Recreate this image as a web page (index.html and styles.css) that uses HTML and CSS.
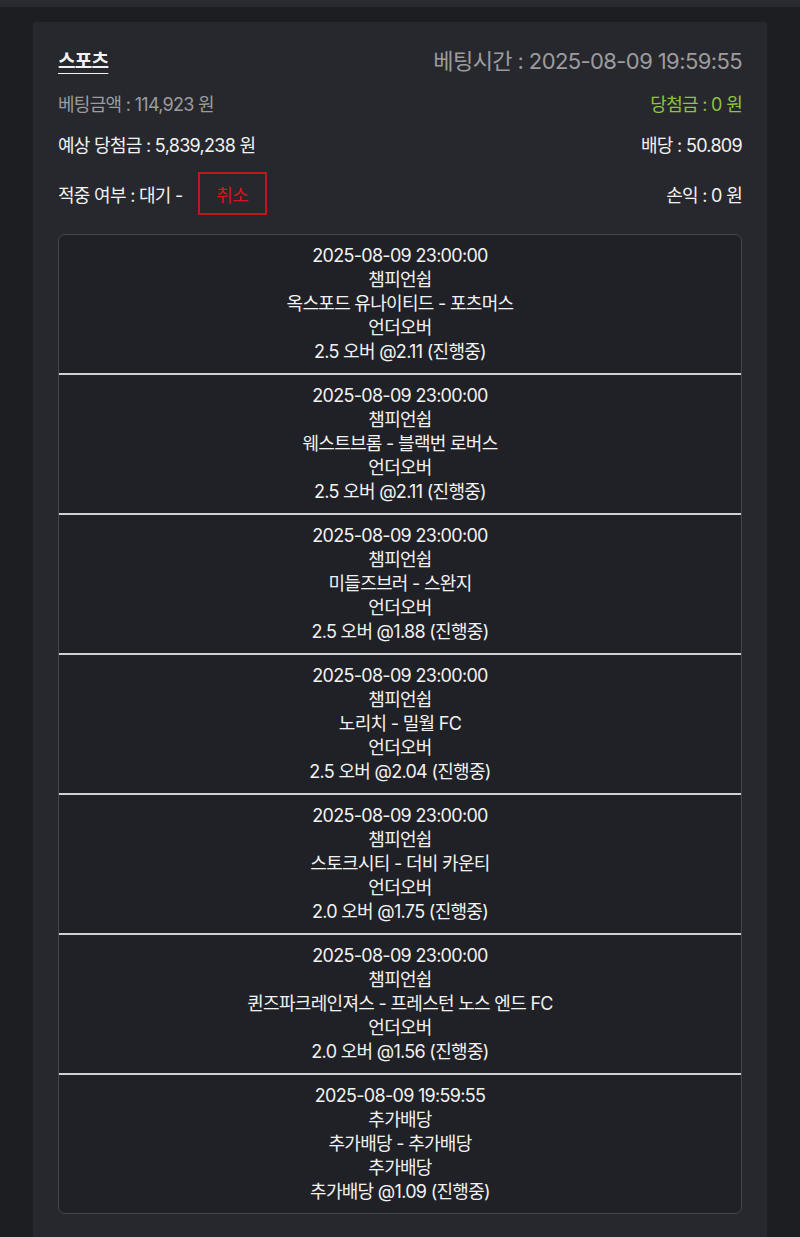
FILE: index.html
```html
<!DOCTYPE html>
<html lang="ko">

<head>
    <meta charset="UTF-8">
    <meta name="viewport" content="width=device-width, initial-scale=1.0">
    <title>베팅내역</title>
    <link rel="stylesheet" href="styles.css">
</head>

<body>
    <div class="topbar"></div>
    <div class="page">
        <div class="bet-card">
            <div class="row">
                <span class="kind">스포츠</span>
                <span class="bet-time">베팅시간 : 2025-08-09 19:59:55</span>
            </div>
            <div class="row muted">
                <span>베팅금액 : 114,923 원</span>
                <span class="win">당첨금 : 0 원</span>
            </div>
            <div class="row">
                <span>예상 당첨금 : 5,839,238 원</span>
                <span>배당 : 50.809</span>
            </div>
            <div class="row status-row">
                <span class="status">적중 여부 : 대기 - <button class="cancel-btn">취소</button></span>
                <span>손익 : 0 원</span>
            </div>

            <div class="picks">
                <div class="pick">
                    <p>2025-08-09 23:00:00</p>
                    <p>챔피언쉽</p>
                    <p>옥스포드 유나이티드 - 포츠머스</p>
                    <p>언더오버</p>
                    <p>2.5 오버 @2.11 (진행중)</p>
                </div>
                <div class="pick">
                    <p>2025-08-09 23:00:00</p>
                    <p>챔피언쉽</p>
                    <p>웨스트브롬 - 블랙번 로버스</p>
                    <p>언더오버</p>
                    <p>2.5 오버 @2.11 (진행중)</p>
                </div>
                <div class="pick">
                    <p>2025-08-09 23:00:00</p>
                    <p>챔피언쉽</p>
                    <p>미들즈브러 - 스완지</p>
                    <p>언더오버</p>
                    <p>2.5 오버 @1.88 (진행중)</p>
                </div>
                <div class="pick">
                    <p>2025-08-09 23:00:00</p>
                    <p>챔피언쉽</p>
                    <p>노리치 - 밀월 FC</p>
                    <p>언더오버</p>
                    <p>2.5 오버 @2.04 (진행중)</p>
                </div>
                <div class="pick">
                    <p>2025-08-09 23:00:00</p>
                    <p>챔피언쉽</p>
                    <p>스토크시티 - 더비 카운티</p>
                    <p>언더오버</p>
                    <p>2.0 오버 @1.75 (진행중)</p>
                </div>
                <div class="pick">
                    <p>2025-08-09 23:00:00</p>
                    <p>챔피언쉽</p>
                    <p>퀸즈파크레인져스 - 프레스턴 노스 엔드 FC</p>
                    <p>언더오버</p>
                    <p>2.0 오버 @1.56 (진행중)</p>
                </div>
                <div class="pick">
                    <p>2025-08-09 19:59:55</p>
                    <p>추가배당</p>
                    <p>추가배당 - 추가배당</p>
                    <p>추가배당</p>
                    <p>추가배당 @1.09 (진행중)</p>
                </div>
            </div>
        </div>
    </div>
</body>

</html>
```

FILE: styles.css
```css
body {
    margin: 0;
    padding: 0;
    background-color: #1d1e22;
    color: #f2f2f2;
    font-family: Inter, "Noto Sans CJK KR", sans-serif;
    font-size: 18px;
    letter-spacing: -0.7px;
}

.topbar {
    height: 7px;
    background-color: #2a2b30;
}

.page {
    padding: 15px 33px 0;
}

.bet-card {
    background-color: #27282d;
    padding: 20px 25px 23px;
    min-height: 1190px;
    box-sizing: border-box;
}

.row {
    display: flex;
    justify-content: space-between;
    align-items: center;
    height: 41px;
}

.row:first-child {
    height: 34px;
    margin-bottom: 6px;
}

.kind {
    font-size: 19px;
    font-weight: bold;
    text-decoration: underline;
    text-underline-offset: 5px;
}

.bet-time {
    color: #9c9c9f;
    font-size: 22px;
    letter-spacing: -0.6px;
}

.muted {
    color: #9c9c9f;
}

.win {
    color: #8cc43c;
}

.status-row {
    height: 59px;
    margin-bottom: 11px;
}

.status {
    display: flex;
    align-items: center;
}

.cancel-btn {
    margin-left: 15px;
    width: 69px;
    height: 43px;
    background: transparent;
    border: 2px solid #c3161c;
    color: #d8151d;
    font-family: inherit;
    font-size: 18px;
    letter-spacing: -0.7px;
    padding: 0;
}

.picks {
    background-color: #202126;
    border: 1px solid #45464b;
    border-radius: 7px;
    overflow: hidden;
}

.pick {
    padding: 9px 0 9px;
    text-align: center;
    border-bottom: 2px solid #d2d2d4;
}

.pick:last-child {
    border-bottom: none;
}

.pick p {
    margin: 0;
    line-height: 24px;
}
```
